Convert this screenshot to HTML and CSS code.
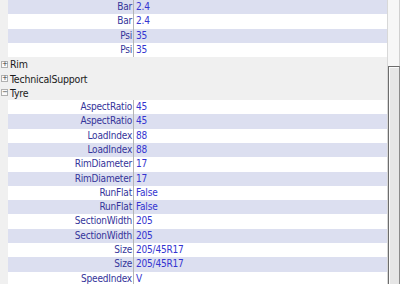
FILE: index.html
```html
<!DOCTYPE html>
<html>
<head>
<meta charset="utf-8">
<link rel="stylesheet" href="styles.css">
</head>
<body>
<div class="grid">
  <div class="list">
    <div class="row alt"><span class="margin"></span><span class="label">Bar</span><span class="value">2.4</span></div>
    <div class="row"><span class="margin"></span><span class="label">Bar</span><span class="value">2.4</span></div>
    <div class="row alt"><span class="margin"></span><span class="label">Psi</span><span class="value">35</span></div>
    <div class="row"><span class="margin"></span><span class="label">Psi</span><span class="value">35</span></div>
    <div class="cat"><span class="box">+</span><span class="cat-name">Rim</span></div>
    <div class="cat"><span class="box">+</span><span class="cat-name">TechnicalSupport</span></div>
    <div class="cat"><span class="box">−</span><span class="cat-name">Tyre</span></div>
    <div class="row"><span class="margin"></span><span class="label">AspectRatio</span><span class="value">45</span></div>
    <div class="row alt"><span class="margin"></span><span class="label">AspectRatio</span><span class="value">45</span></div>
    <div class="row"><span class="margin"></span><span class="label">LoadIndex</span><span class="value">88</span></div>
    <div class="row alt"><span class="margin"></span><span class="label">LoadIndex</span><span class="value">88</span></div>
    <div class="row"><span class="margin"></span><span class="label">RimDiameter</span><span class="value">17</span></div>
    <div class="row alt"><span class="margin"></span><span class="label">RimDiameter</span><span class="value">17</span></div>
    <div class="row"><span class="margin"></span><span class="label">RunFlat</span><span class="value">False</span></div>
    <div class="row alt"><span class="margin"></span><span class="label">RunFlat</span><span class="value">False</span></div>
    <div class="row"><span class="margin"></span><span class="label">SectionWidth</span><span class="value">205</span></div>
    <div class="row alt"><span class="margin"></span><span class="label">SectionWidth</span><span class="value">205</span></div>
    <div class="row"><span class="margin"></span><span class="label">Size</span><span class="value">205/45R17</span></div>
    <div class="row alt"><span class="margin"></span><span class="label">Size</span><span class="value">205/45R17</span></div>
    <div class="row"><span class="margin"></span><span class="label">SpeedIndex</span><span class="value">V</span></div>
  </div>
  <div class="scrollbar">
    <div class="track"></div>
    <div class="thumb"></div>
  </div>
</div>
</body>
</html>
```

FILE: styles.css
```css
html, body {
  margin: 0;
  padding: 0;
  background: #f0f0f0;
  overflow: hidden;
}
.grid {
  display: flex;
  width: 400px;
  height: 284px;
  overflow: hidden;
  font-family: "DejaVu Sans Condensed", "DejaVu Sans", sans-serif;
  font-size: 10px;
  letter-spacing: -0.2px;
}
.list {
  flex: 1;
  display: flex;
  flex-direction: column;
  border-right: 1px solid #d8d8d8;
}
.row {
  display: flex;
  height: 14.3px;
  flex: none;
  line-height: 14.3px;
  background: #ffffff;
}
.row.alt {
  background: #dcdff0;
}
.margin {
  width: 8px;
  flex: none;
  background: #f0f0f0;
}
.label {
  width: 124px;
  flex: none;
  text-align: right;
  padding-right: 1px;
  color: #34349a;
  border-right: 1px solid #b4b4b4;
  white-space: nowrap;
}
.value {
  flex: 1;
  padding-left: 2px;
  color: #3434d0;
  white-space: nowrap;
}
.cat {
  display: flex;
  align-items: center;
  height: 14.3px;
  flex: none;
  background: #f0f0f0;
  color: #1a1a1a;
}
.box {
  width: 5px;
  height: 5px;
  margin-left: 1px;
  border: 1px solid #b0b0b0;
  background: #fafafa;
  color: #333;
  font-family: "DejaVu Sans", sans-serif;
  font-size: 7px;
  letter-spacing: 0;
  line-height: 5px;
  text-align: center;
  flex: none;
}
.cat-name {
  margin-left: 2px;
  font-size: 10.5px;
}
.scrollbar {
  width: 12px;
  flex: none;
  display: flex;
  flex-direction: column;
  background: #f4f4f4;
}
.track {
  height: 66px;
  flex: none;
  background: #f7f7f7;
  border-right: 1px solid #d0d0d0;
}
.thumb {
  flex: 1;
  background: #e6e6e6;
  border: 1px solid #6c6c6c;
  border-right-color: #8a8a8a;
  border-bottom: none;
  box-shadow: inset 1px 1px 0 #fbfbfb;
}
```
